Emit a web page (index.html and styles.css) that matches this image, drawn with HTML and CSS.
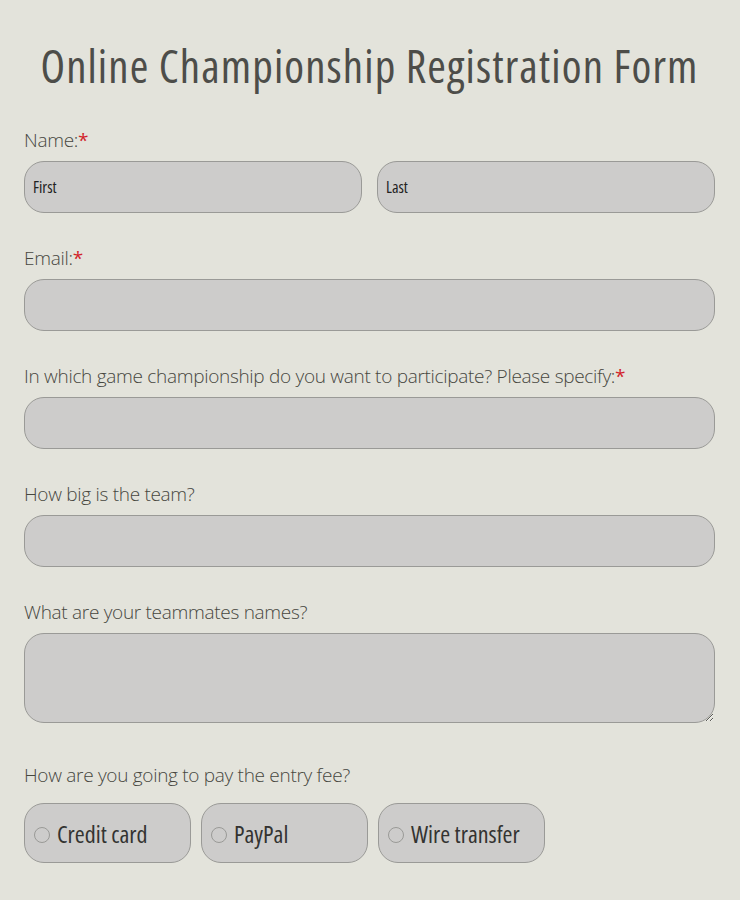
FILE: index.html
```html
<!DOCTYPE html>
<html lang="en">
<head>
  <meta charset="UTF-8">
  <meta name="viewport" content="width=device-width, initial-scale=1.0">
  <title>Online Championship Registration Form</title>
  <link rel="stylesheet" href="styles.css">
</head>
<body>

  <form class="form">
    <h1>Online Championship Registration Form</h1>

    <!-- Name -->
    <div class="field">
      <label class="label">Name:<span class="req">*</span></label>
      <div class="row">
        <input type="text" class="input" placeholder="First">
        <input type="text" class="input" placeholder="Last">
      </div>
    </div>

    <div class="field">
      <label class="label">Email:<span class="req">*</span></label>
      <input type="email" class="input">
    </div>

    <div class="field">
      <label class="label">In which game championship do you want to participate? Please specify:<span class="req">*</span></label>
      <input type="text" class="input">
    </div>

    <div class="field">
      <label class="label">How big is the team?</label>
      <input type="text" class="input">
    </div>

    <div class="field field-wide">
      <label class="label">What are your teammates names?</label>
      <textarea class="input textarea"></textarea>
    </div>

    <!-- Payment options -->
    <div class="field">
      <label class="label label-options">How are you going to pay the entry fee?</label>
      <div class="options">
        <label class="option"><input type="radio" name="pay"><span>Credit card</span></label>
        <label class="option"><input type="radio" name="pay"><span>PayPal</span></label>
        <label class="option"><input type="radio" name="pay"><span>Wire transfer</span></label>
      </div>
    </div>
  </form>

</body>
</html>
```

FILE: styles.css
```css
body {
  margin: 0;
  background-color: #e3e3db;
  font-family: "Open Sans", sans-serif;
  color: #47473f;
}

.form {
  padding: 36px 25px 20px 24px;
}

h1 {
  margin: 0 0 30px;
  text-align: center;
  font-size: 45px;
  font-weight: 400;
  font-stretch: 75%;
  letter-spacing: 1.1px;
  line-height: 60px;
  color: #4d4d49;
}

.field {
  margin-bottom: 31px;
}

.field-wide {
  margin-bottom: 38px;
}

.label {
  display: block;
  font-size: 19px;
  font-weight: 300;
  letter-spacing: -0.3px;
  line-height: 28px;
  margin-bottom: 7px;
}

.label-options {
  margin-bottom: 14px;
}

.req {
  color: #d2232a;
  font-weight: 400;
}

.row {
  display: flex;
  gap: 15px;
}

.input {
  display: block;
  box-sizing: border-box;
  width: 100%;
  height: 52px;
  padding: 0 8px;
  font-family: inherit;
  font-stretch: 75%;
  font-size: 16px;
  color: #222;
  background-color: #cdcccb;
  border: 1px solid #9a9a97;
  border-radius: 20px;
  outline: none;
}

.input::placeholder {
  color: #222;
}

.textarea {
  height: 90px;
  resize: vertical;
}

.options {
  display: flex;
  gap: 10px;
}

.option {
  box-sizing: border-box;
  width: 167px;
  height: 60px;
  display: flex;
  align-items: center;
  padding-left: 9px;
  font-size: 24px;
  font-stretch: 75%;
  color: #333331;
  background-color: #cdcccb;
  border: 1px solid #9a9a97;
  border-radius: 20px;
}

.option input {
  appearance: none;
  width: 16px;
  height: 16px;
  margin: 4px 7px 0 0;
  border: 1px solid #9a9a97;
  border-radius: 50%;
  background-color: #cdcccb;
}
```
